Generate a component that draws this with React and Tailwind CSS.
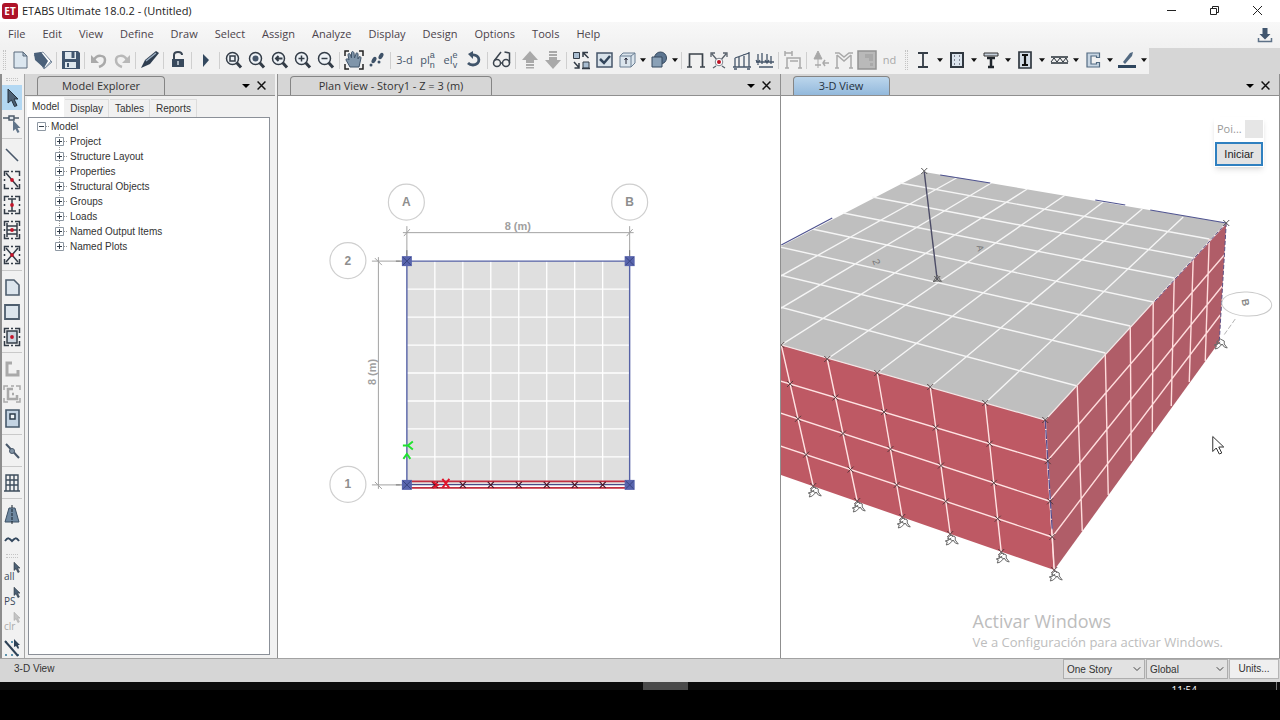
import { useState } from 'react'
import { ChevronDown } from 'lucide-react'

const INK = '#46566a'
const DIM = '#a9a9a9'

const menus = ['File', 'Edit', 'View', 'Define', 'Draw', 'Select', 'Assign', 'Analyze', 'Display', 'Design', 'Options', 'Tools', 'Help']

function Lens({ children }) {
  return (
    <g fill="none" stroke="#333c47" strokeWidth="1.5">
      <path d="M13.5 13.5l4.5 5" strokeWidth="3" />
      <circle cx="9.500" cy="9.500" r="6" fill="#eef2f6" />
      {children}
    </g>
  )
}

function Dashed({ children }) {
  return (
    <g fill="none" stroke="#333c47" strokeWidth="1.500">
      <path d="M3.500 7V2.500H8M14 2.500h4.500V7M18.500 15v4.500H14M8 19.500H3.500V15M10 2.500h2M10 19.500h2M3.500 10v2M18.500 10v2" />
      {children}
    </g>
  )
}

function RedDot() {
  return <circle cx="11" cy="11" r="1.900" fill="#c3162b" stroke="none" />
}

const pointer = 'M7 2v14l3.500-3 3 6.500 2.500-1-3-6.500h4z'

const icons = {
  new: (
    <g stroke="#5b6b7c">
      <path d="M5 3h9l4 4v12H5z" fill="#dbe6ef" />
      <path d="M14 3v4h4z" fill="#a9bccd" />
    </g>
  ),
  open: (
    <g>
      <path d="M11 4l9 9-8 7-3-5z" fill="#d3dde6" stroke="#61758b" strokeWidth=".8" />
      <path d="M2 6l9-3 8 9-6 7z" fill="#fff" stroke="#61758b" strokeWidth=".8" />
      <path d="M2 4l7-1 7 9-4 7-9-8z" fill="#4a6079" />
    </g>
  ),
  save: (
    <g>
      <path d="M2 2h16l2 2v16H2z" fill="#40556e" />
      <path d="M5 3h11v7H5zM5 13h11v6H5z" fill="#dfe8ee" />
      <path d="M11.500 3h3v6h-3zM7 14h2v4H7z" fill="#40556e" />
    </g>
  ),
  undo: (
    <g>
      <path d="M6 11c3-6 11-5 11 0 0 4-3 6-6 7" fill="none" stroke={DIM} strokeWidth="2.500" />
      <path d="M3 6v8h8z" fill={DIM} />
    </g>
  ),
  redo: (
    <g>
      <path d="M16 11c-3-6-11-5-11 0 0 4 3 6 6 7" fill="none" stroke="#b8b8b8" strokeWidth="2.500" />
      <path d="M19 6v8h-8z" fill="#b8b8b8" />
    </g>
  ),
  pen: (
    <g>
      <path d="M2 19l4-8L17 2l3 2-9 11z" fill="#2f3e50" />
      <path d="M7 12l10-8" stroke="#9db0c3" strokeWidth="1.500" />
    </g>
  ),
  lock: (
    <g>
      <path d="M7 10V6c0-4 8-4 8 0" fill="none" stroke="#3a4654" strokeWidth="2" />
      <path d="M5 10h12v8H5z" fill="#38495c" />
      <path d="M11 12v4" stroke="#cfd8e0" strokeWidth="1.500" />
    </g>
  ),
  play: <path d="M8 5l6 6-6 7z" fill="#33485f" />,
  zoomBox: <Lens><path d="M7 7h5v5H7z" /></Lens>,
  zoomAll: <Lens><circle cx="9.500" cy="9.500" r="3" fill={INK} stroke="none" /></Lens>,
  zoomPrev: <Lens><path d="M13.500 9.500H7M9.500 7L7 9.500 9.500 12" strokeWidth="2" /></Lens>,
  zoomIn: <Lens><path d="M6.500 9.500h6M9.500 6.500v6" /></Lens>,
  zoomOut: <Lens><path d="M6.500 9.500h6" /></Lens>,
  hand: (
    <g>
      <path d="M2 7V2h4M16 2h4v5M20 15v5h-4M6 20H2v-5" fill="none" stroke="#222" strokeWidth="1.500" />
      <path d="M7 18l-4-7c0-2 2-1 3 0L5 6c0-2 2-2 2.500 0l1 3V4c0-2 2-2 2.500 0l.5 5L13 5c0-2 2-1 2 0v5l1-2c1-1 2 0 2 1l-2 9z" fill="#7f95aa" stroke="#40546a" />
    </g>
  ),
  steps: (
    <g fill="#3f5268">
      <ellipse cx="8" cy="11" rx="2" ry="3.500" transform="rotate(30 8 11)" />
      <ellipse cx="15" cy="7" rx="2" ry="3.500" transform="rotate(30 15 7)" />
      <circle cx="5" cy="16" r="1.500" />
      <circle cx="13" cy="13" r="1.500" />
    </g>
  ),
  rotate: (
    <g>
      <path d="M9 6c9-1 9 10 1 10-2 0-4-1-5-2" fill="none" stroke="#40546a" strokeWidth="2.800" />
      <path d="M10 2v8L5 5z" fill="#40546a" />
    </g>
  ),
  glasses: (
    <g fill="none" stroke="#3b444e" strokeWidth="1.500">
      <circle cx="6" cy="14" r="3.500" />
      <circle cx="15" cy="14" r="3.500" />
      <path d="M9.500 14h2M3 12l7-9M18.500 14V4l-5-1" />
    </g>
  ),
  up: <path d="M11 2l8 9h-4v3H7v-3H3zM7 15h8v2H7zM7 18h8v1.500H7z" fill={DIM} />,
  down: <path d="M11 20l8-9h-4V8H7v3H3zM7 5h8v2H7zM7 2h8v2H7z" fill={DIM} />,
  selectObj: (
    <g fill="#a9bdd0" stroke="#333c47">
      <path d="M3.500 3.500h6v6h-6zM13 13h6v6h-6z" />
      <path d="M13 8V3.500h5M13.500 4l5 5M4 13l4.500 5M9 14v5H4.500M12 19.500h8M19.500 12" fill="none" strokeWidth="1.500" />
    </g>
  ),
  check: (
    <g>
      <path d="M4 4h15v14H4z" fill="#d8e2ea" stroke={INK} strokeWidth="1.500" />
      <path d="M7 10l4 4 6-7" fill="none" stroke="#32455b" strokeWidth="2.500" />
    </g>
  ),
  cube: (
    <g fill="#dbe5ed" stroke="#6b7f93">
      <path d="M4 7l3-3h12v10l-4 4H4zM4 7h11v11M15 7l4-3" />
      <path d="M10 9v6M8.500 11l1.500-2 1.500 2" stroke="#223" />
    </g>
  ),
  solid: (
    <g fill="#5c7590" stroke="#34485e">
      <circle cx="12.500" cy="9" r="6" />
      <path d="M4 8h10v10H4z" fill="#8aa1b7" />
    </g>
  ),
  frame: <path d="M4.500 18V5h13v13M2 18h5M15 18h5" fill="none" stroke="#3b434b" strokeWidth="1.700" />,
  joint: (
    <g>
      <path d="M4 5l6 7M18 5l-6 7M8 17l-3 2M14 17l3 2M3 8V4h4M15 4h4v4" fill="none" stroke="#59626c" strokeWidth="1.300" />
      <circle cx="11" cy="13" r="3.800" fill="#fff" stroke="#7b848e" />
      <circle cx="11" cy="13" r="2" fill="#bd1023" />
    </g>
  ),
  moment: <path d="M2 18h18M4 18V9M8 18V8M13 18V5M18 18V3M4 9L18 4M3 20h3M16 20h3" fill="none" stroke={INK} strokeWidth="1.300" />,
  loads: <path d="M2 13h18M4 5v11M8 4v11M13 5v10M17 7v8M5 18h14M2 11l2 3 2-3M11 11l2 3 2-3" fill="none" stroke={INK} strokeWidth="1.300" />,
  portal: <path d="M3 2v5M3 4h7M10 2v5M5 19V9h13v10M3 19h4M16 19h4M8 12h8" fill="none" stroke={DIM} strokeWidth="1.500" />,
  pin: (
    <g>
      <path d="M8 2l4 8H4zM8 10v9" fill={DIM} stroke={DIM} />
      <path d="M19 14h-6M15 11l-2 3 2 3M5 16h6" fill="none" stroke={DIM} strokeWidth="1.500" />
    </g>
  ),
  truss: <path d="M4 19V6M18 19V6M4 6l7 6 7-6M2 4h4l5 4 5-4h4M2 19h4M16 19h4" fill="none" stroke={DIM} strokeWidth="1.500" />,
  slab: (
    <g>
      <path d="M2 2h18v18H2z" fill="#b9b9b9" stroke="#929292" strokeWidth="1.500" />
      <path d="M9 5h8v7h-4v-3H9zM14 14h3v3h-3z" fill="#a9a9a9" />
    </g>
  ),
  ibeam: <path d="M6 4h10M6 18h10M11 4v14" fill="none" stroke="#353d46" strokeWidth="1.800" />,
  column: (
    <g>
      <path d="M5 4h12v14H5z" fill="#dbe4ed" stroke="#303840" strokeWidth="2" />
      <path d="M8 7h1M13 7h1M8 11h1M13 11h1M8 15h1M13 15h1" stroke="#223" />
    </g>
  ),
  tee: (
    <g>
      <path d="M4 4h14v3H4z" fill="#c7d1dc" stroke="#333" />
      <path d="M7 9h8M8 18h6M11 9v9" fill="none" stroke="#20262c" strokeWidth="2.500" />
    </g>
  ),
  boxed: (
    <g>
      <path d="M5 3h12v16H5z" fill="#d5dee7" stroke="#303840" strokeWidth="1.700" />
      <path d="M8 6h6M8 16h6M11 6v10" fill="none" stroke="#111" strokeWidth="2.200" />
    </g>
  ),
  joist: (
    <g fill="none" stroke="#273038">
      <path d="M3 8h17M3 14h17" strokeWidth="1.500" />
      <path d="M3 13l3-4 3 4 3-4 3 4 3-4 2 4" />
    </g>
  ),
  channel: <path d="M17.500 4H5v14h12.500v-4.500h-3v1.500H9V7h5.500v1.500h3z" fill="#c8d6e3" stroke="#536b82" strokeWidth="1.200" />,
  draft: (
    <g>
      <path d="M7 13l7-9 3-1-1 4-7 8z" fill="#536a82" />
      <path d="M2 16h18v3H2z" fill="#2f465e" />
    </g>
  ),
  pointer: <path d={pointer} fill="#4d6175" stroke="#24303c" />,
  reshape: (
    <g>
      <path d="M2 6h16" stroke="#4d5b69" strokeWidth="1.500" />
      <path d="M8 4h5v4H8z" fill="#dfe6ec" stroke="#4d5b69" strokeWidth="1.500" />
      <path d="M12 8v11l2.500-2 2 4 2-1-2-4h3z" fill="#61758a" />
    </g>
  ),
  line: <path d="M5 5l12 12" stroke="#49586a" strokeWidth="1.600" />,
  quickLine: <Dashed><path d="M5 4l12 14" /><RedDot /></Dashed>,
  quickColumn: <Dashed><path d="M7 5h8M7 17h8M11 5v12" /><RedDot /></Dashed>,
  quickBeams: <Dashed><path d="M6 4v14M16 4v14M6 7h10M6 11h10M6 15h10" /><RedDot /></Dashed>,
  quickBrace: <Dashed><path d="M5 4l12 14M17 4L5 18" /><RedDot /></Dashed>,
  poly: <path d="M5 4h8l5 5v10H5z" fill="#dce5ed" stroke="#4e5e6e" strokeWidth="1.600" />,
  rect: <path d="M4 4h14v14H4z" fill="#dce5ed" stroke="#4e5e6e" strokeWidth="1.800" />,
  quickRect: <Dashed><path d="M6 5h10v12H6z" fill="#cbd5df" /><RedDot /></Dashed>,
  wall: <path d="M11 5H6v12h11v-5" fill="none" stroke="#a9a9a9" strokeWidth="3" />,
  quickWall: (
    <g fill="none" stroke="#a9a9a9">
      <path d="M3 7V3h4M15 3h4v4M19 15v4h-4M7 19H3v-4M10 3h3" strokeWidth="1.500" />
      <path d="M12 6H7v10h9v-4M11 11h2" strokeWidth="2.500" />
    </g>
  ),
  opening: (
    <g>
      <path d="M5 2h13v17H5z" fill="#c3d3e2" stroke="#47596b" strokeWidth="1.600" />
      <path d="M9 6h5v5H9z" fill="#eef4f8" stroke="#2d3c4b" strokeWidth="1.500" />
    </g>
  ),
  link: (
    <g stroke="#49586a" fill="none">
      <path d="M5 4l13 14" strokeWidth="2" />
      <circle cx="11" cy="11" r="2.500" fill="#8294a5" />
    </g>
  ),
  grid: <path d="M5 3h12v16H5zM9 3v16M13 3v16M5 8h12M5 13h12M3 19h16" fill="none" stroke="#3e4d5c" strokeWidth="1.400" />,
  tower: (
    <g>
      <path d="M8 4h6l4 14H4z" fill="#6f88a0" stroke="#3c5065" />
      <path d="M11 1v20" stroke="#18222c" strokeDasharray="3 1" />
    </g>
  ),
  wave: <path d="M4 12c3-4 4-3 7 0 3-3 4-4 7 0" fill="none" stroke="#33475d" strokeWidth="2" />,
  selectLine: (
    <g>
      <path d="M4 5h2M10 5h2M4 18h2M10 18h2M16 18h2" stroke="#5d93ad" strokeWidth="2" />
      <path d="M4 4l13 15" stroke="#2f4256" strokeWidth="2" />
      <path d="M13 2v8l2-1 2 3 1-1-1-3h2z" fill="#2f4256" />
    </g>
  ),
}

function Icon({ name }) {
  return (
    <svg viewBox="0 0 22 22" className="size-[22px] shrink-0" aria-hidden="true">
      {icons[name]}
    </svg>
  )
}

function Caret() {
  return (
    <svg viewBox="0 0 8 5" className="h-[4px] w-[6px]" aria-hidden="true">
      <path d="M0 0h8L4 5z" fill="#111" />
    </svg>
  )
}

// '|' is a separator, 'v' is the drop-down arrow of the tool before it
const mainTools = [
  'new', 'open', '|', 'save', '|', 'undo', 'redo', '|', 'pen', '|', 'lock', '|', 'play', '|',
  'zoomBox', 'zoomAll', 'zoomPrev', 'zoomIn', 'zoomOut', '|', 'hand', 'steps', '|',
  't:3-d', 't:plan', 't:elev', 'rotate', '|', 'glasses', '|', 'up', 'down', '|',
  'selectObj', 'check', 'cube', 'v', 'solid', 'v', '|', 'frame', 'joint', 'moment', 'loads', '|',
  'portal', '|', 'pin', 'truss', 'slab', 't:nd',
]

const sectionTools = ['ibeam', 'column', 'tee', 'boxed', 'joist', 'channel', 'draft']

const sideTools = [
  'pointer', 'reshape', '|', 'line', 'quickLine', 'quickColumn', 'quickBeams', 'quickBrace', '|',
  'poly', 'rect', 'quickRect', '|', 'wall', 'quickWall', 'opening', '|', 'link', '|', 'grid', '|', 'tower', 'wave',
]

function ToolText({ label }) {
  if (label === 'plan' || label === 'elev') {
    return (
      <span className="flex items-center text-[11px] leading-[12px] text-[#46566a]">
        {label.slice(0, 2)}
        <span className="flex flex-col font-['Liberation_Sans',sans-serif] text-[9px] leading-[10px]">
          <span>{label[2]}</span>
          <span>{label[3]}</span>
        </span>
      </span>
    )
  }
  return <span className={`text-[11px] ${label === 'nd' ? 'text-[#a9a9a9]' : 'text-[#46566a]'}`}>{label}</span>
}

function Grip({ className }) {
  return <span className={`border-dotted border-[#c4c4c4] ${className}`} />
}

function Toolbar() {
  return (
    <div className="flex h-[26px] shrink-0 items-stretch bg-[#d6d6d6]">
      <div className="flex items-center bg-[#f1f1f1] pb-[2px]">
        <Grip className="mr-[2px] ml-[3px] h-5 w-[3px] border-x" />
        {mainTools.map((t, i) => {
          if (t === '|') return <span key={i} className="mx-[2px] h-[17px] w-px bg-[#cfcfcf]" />
          if (t === 'v') return <button key={i} aria-label="More" className="flex w-[9px] justify-center"><Caret /></button>
          return (
            <button key={i} aria-label={t.replace('t:', '')} className="flex h-[24px] w-[23px] items-center justify-center">
              {t.startsWith('t:') ? <ToolText label={t.slice(2)} /> : <Icon name={t} />}
            </button>
          )
        })}
      </div>
      <div className="flex items-center bg-[#f1f1f1] pb-[2px]">
        <Grip className="mr-[3px] ml-1 h-5 w-[3px] border-x" />
        {sectionTools.map((t) => (
          <span key={t} className="flex items-center">
            <button aria-label={t} className="flex h-[24px] w-[23px] items-center justify-center"><Icon name={t} /></button>
            <button aria-label={`${t} options`} className="flex w-[11px] justify-center"><Caret /></button>
          </span>
        ))}
      </div>
    </div>
  )
}

function SelectText({ label, dim }) {
  return (
    <button className={`relative flex h-[25px] shrink-0 items-end pb-[3px] pl-[2px] text-[10px] leading-3 ${dim ? 'text-[#a9a9a9]' : 'text-[#3b4a5b]'}`}>
      {label}
      <svg viewBox="4 0 16 22" className="absolute top-px right-0 h-[13px] w-[10px]" aria-hidden="true">
        <path d={pointer} fill={dim ? '#c4c4c4' : '#4d6175'} stroke={dim ? '#a9a9a9' : '#24303c'} />
      </svg>
    </button>
  )
}

function SideBar() {
  return (
    <div className="flex w-[24px] shrink-0 flex-col overflow-hidden border-l-2 border-[#8d8d8d] bg-[#f1f1f1] pr-[2px]">
      <Grip className="mx-1 mt-1 mb-1 h-[3px] shrink-0 border-y" />
      {sideTools.map((t, i) =>
        t === '|' ? (
          <span key={i} className="my-[3px] h-px shrink-0 bg-[#c9c9c9]" />
        ) : (
          <button key={i} aria-label={t} className={`flex h-[25px] shrink-0 items-center justify-center ${t === 'pointer' ? 'bg-[#b3d8f3]' : ''}`}>
            <Icon name={t} />
          </button>
        ),
      )}
      <Grip className="mx-1 my-[2px] h-[4px] shrink-0 border-y" />
      <SelectText label="all" />
      <SelectText label="PS" />
      <SelectText label="clr" dim />
      <button aria-label="select by line" className="flex h-[25px] shrink-0 items-center justify-center"><Icon name="selectLine" /></button>
    </div>
  )
}

function PaneHeader({ title, active, tabClass }) {
  return (
    <div className="flex h-[22px] shrink-0 items-end border-b border-[#8f8f8f] bg-[#d6d6d6]">
      <h2 className={`flex h-[19px] items-center justify-center rounded-t border border-b-0 border-[#858585] text-[11px] ${tabClass} ${active ? 'bg-linear-to-b from-[#bcd6ec] to-[#93b9dc] text-[#26323e]' : 'bg-[#d6d6d6] text-[#333]'}`}>
        {title}
      </h2>
      <div className="ml-auto flex h-[19px] items-center gap-[7px] pr-[9px]">
        <button aria-label={`${title} menu`} className="flex"><svg viewBox="0 0 8 4" className="h-[4px] w-[8px]"><path d="M0 0h8L4 4z" /></svg></button>
        <button aria-label={`Close ${title}`}><svg viewBox="0 0 8 8" className="size-[9px]"><path d="M.5.5l7 7M7.500.5l-7 7" stroke="#111" strokeWidth="1.300" /></svg></button>
      </div>
    </div>
  )
}

const treeItems = ['Project', 'Structure Layout', 'Properties', 'Structural Objects', 'Groups', 'Loads', 'Named Output Items', 'Named Plots']

function Expander({ open }) {
  return (
    <svg viewBox="0 0 12 9" className="h-[9px] w-[12px]" aria-hidden="true">
      <path d="M.5.5h8v8h-8z" fill="#fff" stroke="#8e98a3" />
      <path d={open ? 'M2 4.500h5' : 'M2 4.500h5M4.500 2v5'} stroke="#333e4a" />
      <path d="M9 4.500h3" stroke="#999" strokeDasharray="1 1" />
    </svg>
  )
}

function ModelExplorer() {
  const [tab, setTab] = useState('Model')
  return (
    <section className="flex w-[251px] shrink-0 flex-col border-l border-[#a5a5a5] bg-[#f1f1f1] font-['Liberation_Sans',sans-serif]">
      <div className="font-['Open_Sans',sans-serif]"><PaneHeader title="Model Explorer" tabClass="ml-[12px] w-[128px]" /></div>
      <div className="flex h-[21px] items-end gap-px pl-[2px] text-[10px]">
        {['Model', 'Display', 'Tables', 'Reports'].map((t) => (
          <button
            key={t}
            onClick={() => setTab(t)}
            className={`px-[5px] text-[#333] ${t === tab ? 'h-[20px] bg-white pb-[2px]' : 'h-[18px] border-t border-r border-[#dcdcdc]'}`}
          >
            {t}
          </button>
        ))}
      </div>
      <div className="mr-[5px] mb-[3px] ml-[3px] flex-1 border border-[#8b9098] bg-white pt-px pl-[8px] text-[10px] leading-[15px] text-[#333]">
        <div className="flex items-center gap-[2px]"><Expander open />Model</div>
        <ul className="relative ml-[18px]">
          <li aria-hidden="true" className="absolute top-0 left-[4px] h-[112px] border-l border-dotted border-[#999]" />
          {treeItems.map((t) => (
            <li key={t} className="relative flex items-center gap-[3px]"><Expander />{t}</li>
          ))}
        </ul>
      </div>
    </section>
  )
}

const steps = [1, 2, 3, 4, 5, 6, 7]

function Bubble({ x, y, label }) {
  return (
    <g>
      <circle cx={x} cy={y} r="18" fill="none" stroke="#cfcfcf" strokeWidth="1.200" />
      <text x={x} y={y + 4} textAnchor="middle" fontSize="12" fontWeight="bold" fill="#8e8e8e">{label}</text>
    </g>
  )
}

function PlanView() {
  const x0 = 407
  const x1 = 630
  const y0 = 261
  const y1 = 485
  return (
    <svg viewBox="278 96 502 562" className="min-h-0 w-full flex-1 bg-white font-['Liberation_Sans',sans-serif]">
      <path d={`M${x0} ${y0}H${x1}V${y1}H${x0}z`} fill="#dfdfdf" />
      {steps.map((k) => (
        <path key={k} d={`M${x0 + k * 28} ${y0}V${y1}M${x0} ${y0 + k * 28}H${x1}`} stroke="#fff" strokeWidth="1.300" />
      ))}
      <path d="M407 226v30M630 226v30M403 232.500h231M404 236l6-7M627 236l6-7M372 261h28M372 485h28M378.500 257v232M375 258l7 7M375 482l7 7" fill="none" stroke="#a3a3a3" />
      <path d="M407 250v11M630 250v11M396 261h11M396 485h11" stroke="#777" />
      <path d={`M${x0} ${y1}V${y0}H${x1}V${y1}`} fill="none" stroke="#5662a6" strokeWidth="1.400" />
      <path d={`M${x0} 481.500H${x1}M${x0} 488H${x1}`} stroke="#c22e40" strokeWidth="1.700" />
      <path d={`M${x0} 484.700H${x1}`} stroke="#4b4b86" strokeWidth="1.300" />
      {steps.map((k) => (
        <path key={k} d={`M${x0 + k * 28 - 3} 482l6 6m0-6l-6 6`} stroke="#4a1626" strokeWidth="1.200" />
      ))}
      <path d="M433 482l5 3-5 3M442.500 479l7 9M449.500 479l-7 9" fill="none" stroke="#e0142b" strokeWidth="1.900" />
      <path d="M403 445.500h5l5-4M408 445.500l5 4M403.500 459l3.500-5 3.500 5" fill="none" stroke="#1fe32e" strokeWidth="1.900" />
      {[[x0, y0], [x1, y0], [x0, y1], [x1, y1]].map(([x, y]) => (
        <g key={`${x}-${y}`}>
          <path d={`M${x - 5} ${y - 5}h10v10h-10z`} fill="#5864ad" />
          <path d={`M${x - 4} ${y - 4}l8 8m0-8l-8 8`} stroke="#39447f" />
        </g>
      ))}
      <Bubble x={406.5} y={202} label="A" />
      <Bubble x={630} y={202} label="B" />
      <Bubble x={348} y={260.5} label="2" />
      <Bubble x={348} y={484.500} label="1" />
      <g fontSize="11" fontWeight="bold" fill="#a0a0a0" textAnchor="middle">
        <text x="518" y="230">8 (m)</text>
        <text transform="translate(376 372) rotate(-90)">8 (m)</text>
      </g>
    </svg>
  )
}

// Mesh lines of the three visible faces, each as [start, end] on opposite edges
const roofCols = [
  [[698, 322], [958, 177]], [[739, 333], [991, 183]], [[781, 345], [1027, 189]], [[827, 359], [1065, 195]],
  [[877, 373], [1103, 202]], [[930, 387], [1142, 209]], [[985, 403], [1183, 217]],
]
const roofRows = [
  [[900, 183], [1209, 239]], [[872, 197], [1193, 258]], [[843, 213], [1174, 278]], [[812, 229], [1153, 302]],
  [[780, 247], [1130, 326]], [[780, 275], [1105, 353]], [[780, 307], [1077, 386]],
]
const frontCols = [
  [[781, 345], [813, 486]], [[827, 359], [857, 501]], [[877, 373], [902, 517]],
  [[930, 387], [950, 534]], [[985, 403], [1001, 552]], [[1045, 420], [1054, 570]],
]
const frontRows = [[[780, 381], [1047, 461]], [[780, 413], [1049, 501]], [[780, 446], [1052, 537]]]
const sideCols = [
  [[1077, 386], [1082, 531]], [[1105, 353], [1108, 495]], [[1130, 326], [1131, 461]], [[1153, 302], [1152, 432]],
  [[1174, 278], [1171, 406]], [[1193, 258], [1189, 382]], [[1209, 239], [1205, 361]],
]
const sideRows = [[[1047, 461], [1224, 255]], [[1049, 501], [1222, 286]], [[1052, 537], [1220, 315]]]

function intersect([[x1, y1], [x2, y2]], [[x3, y3], [x4, y4]]) {
  const d = (x1 - x2) * (y3 - y4) - (y1 - y2) * (x3 - x4)
  const t = ((x1 - x3) * (y3 - y4) - (y1 - y3) * (x3 - x4)) / d
  return [x1 + t * (x2 - x1), y1 + t * (y2 - y1)]
}

function Face({ points, lines, fill, stroke }) {
  return (
    <g>
      <polygon points={points} fill={fill} />
      <path d={lines.map(([p, q]) => `M${p}L${q}`).join('')} stroke={stroke} strokeWidth="1.400" />
    </g>
  )
}

function ThreeDView() {
  const nodes = frontCols.flatMap((col) => [col[0], ...frontRows.map((row) => intersect(col, row)), col[1]])
  const supports = frontCols.map((col) => col[1])
  const cross = ([x, y]) => `M${x - 3} ${y - 3}l6 6m0-6l-6 6`
  return (
    <svg viewBox="781 96 498 562" className="min-h-0 w-full flex-1 bg-white font-['Liberation_Sans',sans-serif]">
      <Face points="658,310 1045,420 1226,223 924,172" lines={[...roofCols, ...roofRows]} fill="#bfbfbf" stroke="#f5f5f5" />
      <Face points="658,310 1045,420 1054,570 697,446" lines={[...frontCols, ...frontRows]} fill="#be5964" stroke="#ffe3e3" />
      <Face points="1045,420 1226,223 1219,342 1054,570" lines={[...sideCols, ...sideRows]} fill="#b05d68" stroke="#ffdcdc" />
      <path d="M658 310L1045 420L1226 223" fill="none" stroke="#f3e6e6" strokeWidth="1.200" />
      <path d="M940 175l50 8M1095 200l30 5M1150 210l76 13M781 245l51-27" stroke="#4f5390" strokeWidth="1.200" />
      <path d="M1226 223l-72 79M1226 223l-7 119" stroke="#5b4f83" strokeDasharray="4 2" />
      <path d="M1045 420l9 150" stroke="#ffe3e3" strokeWidth="1.500" />
      <path d="M1045 420l7 110" stroke="#544b8c" strokeWidth="1.300" strokeDasharray="9 1" />
      <path d="M924 172l13 108" stroke="#4c4c66" strokeWidth="1.400" />
      <path d={nodes.map(cross).join('')} stroke="#4a3539" strokeWidth=".9" />
      <path d={[[924, 171], [1226, 223], [937, 279]].map(cross).join('')} stroke="#555" />
      <path d="M937 275l-4 7M937 275l4 7M933 281h9" stroke="#666" />
      {[...supports, [1219, 338]].map(([x, y]) => (
        <path key={x} d={`M${x - 4} ${y + 11}l1-3-2-1 3-1 0-3 3-2 4 2 0 3 3 4-3-1-2-3-4 4zM${x - 3} ${y + 4}l6 3M${x - 3} ${y + 7}l4-3`} fill="none" stroke="#6b6b6b" />
      ))}
      <ellipse cx="1246.500" cy="304" rx="25" ry="12" fill="none" stroke="#c9c9c9" transform="rotate(3 1246 304)" />
      <path d="M1235 319l-12 17" stroke="#b5b5b5" strokeDasharray="5 2" />
      <g fontWeight="bold" fontSize="10" fill="#888" textAnchor="middle">
        <text transform="translate(1242 303) rotate(80)">B</text>
        <text transform="translate(977 249) rotate(75)" fontSize="9" fill="#777" fontWeight="normal">A</text>
        <text transform="translate(873 263) rotate(70)" fontWeight="normal" fill="#777">2</text>
      </g>
      <path d="M1212.500 436.500v15l3.500-3.500 3 6 2.500-1-3-6h5z" fill="#fff" stroke="#333" />
    </svg>
  )
}

function Status() {
  return (
    <footer className="flex h-[24px] shrink-0 items-start border-t border-[#a2a2a2] bg-[#d6d6d6] font-['Liberation_Sans',sans-serif] text-[10px] leading-[20px] text-[#333]">
      <span className="pl-[14px]">3-D View</span>
      <div className="ml-auto flex gap-px pr-px">
        {['One Story', 'Global'].map((v) => (
          <label key={v} className="relative flex">
            <select aria-label={v} className="h-[20px] w-[82px] appearance-none border border-[#adadad] bg-[#e2e2e2] pl-[3px] outline-none">
              <option>{v}</option>
            </select>
            <ChevronDown className="pointer-events-none absolute top-[4px] right-[2px] size-[12px] text-[#444]" strokeWidth={2} />
          </label>
        ))}
        <button className="h-[20px] w-[50px] border border-[#b5b5b5] bg-[#efefef] leading-[18px]">Units...</button>
      </div>
    </footer>
  )
}

function App() {
  return (
    <div className="flex h-screen flex-col overflow-hidden bg-black font-['Open_Sans',sans-serif] text-[11px] text-[#222]">
      <header className="flex h-[22px] shrink-0 items-center bg-white pl-[2px]">
        <svg viewBox="0 0 16 16" className="size-[16px]" aria-hidden="true">
          <rect width="16" height="16" rx="3" fill="#ae1328" />
          <text x="8" y="11.500" textAnchor="middle" fontSize="10" fontWeight="bold" fill="#fff">ET</text>
        </svg>
        <h1 className="ml-1">ETABS Ultimate 18.0.2 - (Untitled)</h1>
        <div className="ml-auto flex items-center gap-[32px] pr-[17px] pb-[2px]">
          <button aria-label="Minimize"><svg viewBox="0 0 11 11" className="size-[11px]"><path d="M1 5.500h9" stroke="#222" /></svg></button>
          <button aria-label="Restore"><svg viewBox="0 0 11 11" className="size-[11px]"><path d="M1.500 3.500h6v6h-6zM3.500 3V1.500h6v6H8" fill="none" stroke="#222" /></svg></button>
          <button aria-label="Close"><svg viewBox="0 0 11 11" className="size-[11px]"><path d="M1 1l9 9M10 1l-9 9" stroke="#222" /></svg></button>
        </div>
      </header>
      <nav className="flex h-[26px] shrink-0 items-center gap-[17px] bg-linear-to-b from-[#f8f8f8] to-[#f1f1f1] pb-px pl-[8px] text-[#4b434b]">
        {menus.map((m) => (
          <button key={m}>{m}</button>
        ))}
        <button aria-label="Download" className="mr-[7px] ml-auto">
          <svg viewBox="0 0 16 16" className="size-[16px]" aria-hidden="true">
            <path d="M5.500 1h5v6h3L8 12.500 2.500 7h3z" fill="#41566e" />
            <path d="M1.500 11v3.500h13V11" fill="none" stroke="#5d7187" strokeWidth="1.500" />
          </svg>
        </button>
      </nav>
      <Toolbar />
      <main className="flex min-h-0 flex-1 bg-[#f1f1f1]">
        <SideBar />
        <ModelExplorer />
        <section className="ml-[2px] flex min-w-0 flex-[503] flex-col border-l border-[#8f8f8f]">
          <PaneHeader title="Plan View - Story1 - Z = 3 (m)" tabClass="ml-[12px] w-[202px]" />
          <PlanView />
        </section>
        <section className="relative flex min-w-0 flex-[500] flex-col border-x border-[#8f8f8f]">
          <PaneHeader title="3-D View" active tabClass="ml-[12px] w-[97px]" />
          <ThreeDView />
          <div className="absolute top-[43px] right-[15px] w-[50px] bg-white p-px shadow-md">
            <div className="flex h-[22px] items-center justify-between pl-[2px] text-[#999]">
              Poi...
              <span className="size-[18px] bg-[#e6e6e6]" />
            </div>
            <button className="mt-[2px] h-[24px] w-full border-2 border-[#2f80c0] bg-[#e3e3e3] font-['Liberation_Sans',sans-serif]">Iniciar</button>
          </div>
          <div className="pointer-events-none absolute right-[56px] bottom-[7px] text-[#bdbdbd]">
            <p className="text-[18px] leading-6">Activar Windows</p>
            <p className="text-[13px] leading-[18px]">Ve a Configuración para activar Windows.</p>
          </div>
        </section>
      </main>
      <Status />
      <div className="relative flex h-[8px] shrink-0 justify-center overflow-hidden bg-[#0b0b0b]">
        <span className="ml-[50px] w-[45px] bg-[#4a4a4a]" />
        <time className="absolute right-[83px] h-[8px] overflow-hidden pt-[3px] text-[10px] leading-[10px] text-white">11:54</time>
        <span className="absolute right-[3px] h-[8px] w-px bg-[#777]" />
      </div>
      <div className="h-[30px] shrink-0 bg-black" />
    </div>
  )
}

export default App
